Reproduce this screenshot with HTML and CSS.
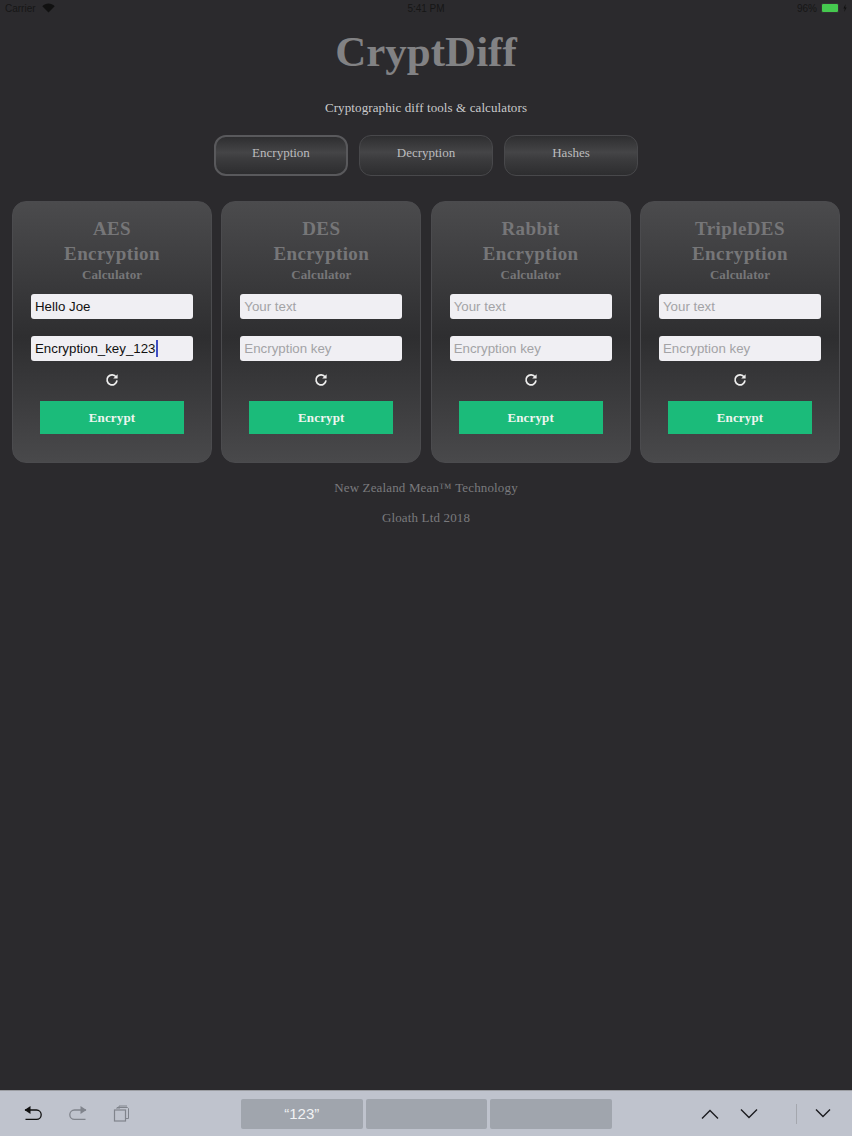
FILE: index.html
```html
<!DOCTYPE html>
<html lang="en">
<head>
    <meta charset="UTF-8">
    <meta name="viewport" content="width=device-width, initial-scale=1.0">
    <title>CryptDiff</title>
    <link rel="stylesheet" href="styles.css">
</head>
<body>
    <div class="status-bar">
        <div class="status-left">
            <span>Carrier</span>
            <svg class="wifi" width="13" height="10" viewBox="0 0 13 10"><path d="M6.5 9.6 0.3 3.2C3.8 -0.4 9.2 -0.4 12.7 3.2Z" fill="#111"/></svg>
        </div>
        <div class="status-time">5:41 PM</div>
        <div class="status-right">
            <span>96%</span>
            <span class="battery"></span>
            <svg width="4" height="8" viewBox="0 0 4 8"><path d="M2.6 0 0.4 4.4H1.8L1.2 8 3.6 3.4H2.2Z" fill="#111"/></svg>
        </div>
    </div>

    <header class="header">
        <h1>CryptDiff</h1>
        <p class="tagline">Cryptographic diff tools &amp; calculators</p>
    </header>

    <nav class="tabs">
        <div class="tab active">Encryption</div>
        <div class="tab">Decryption</div>
        <div class="tab">Hashes</div>
    </nav>

    <main class="cards">
        <section class="card">
            <h2>AES<br>Encryption</h2>
            <h3>Calculator</h3>
            <div class="field">Hello Joe</div>
            <div class="field">Encryption_key_123<span class="caret"></span></div>
            <svg class="refresh" width="14" height="14" viewBox="0 0 14 14"><path d="M11.2 4.1A5 5 0 1 0 12 7.4" fill="none" stroke="#eee" stroke-width="1.7"/><path d="M12.6 1.2V5.6H8.2Z" fill="#eee"/></svg>
            <div class="encrypt">Encrypt</div>
        </section>
        <section class="card">
            <h2>DES<br>Encryption</h2>
            <h3>Calculator</h3>
            <div class="field empty">Your text</div>
            <div class="field empty">Encryption key</div>
            <svg class="refresh" width="14" height="14" viewBox="0 0 14 14"><path d="M11.2 4.1A5 5 0 1 0 12 7.4" fill="none" stroke="#eee" stroke-width="1.7"/><path d="M12.6 1.2V5.6H8.2Z" fill="#eee"/></svg>
            <div class="encrypt">Encrypt</div>
        </section>
        <section class="card">
            <h2>Rabbit<br>Encryption</h2>
            <h3>Calculator</h3>
            <div class="field empty">Your text</div>
            <div class="field empty">Encryption key</div>
            <svg class="refresh" width="14" height="14" viewBox="0 0 14 14"><path d="M11.2 4.1A5 5 0 1 0 12 7.4" fill="none" stroke="#eee" stroke-width="1.7"/><path d="M12.6 1.2V5.6H8.2Z" fill="#eee"/></svg>
            <div class="encrypt">Encrypt</div>
        </section>
        <section class="card">
            <h2>TripleDES<br>Encryption</h2>
            <h3>Calculator</h3>
            <div class="field empty">Your text</div>
            <div class="field empty">Encryption key</div>
            <svg class="refresh" width="14" height="14" viewBox="0 0 14 14"><path d="M11.2 4.1A5 5 0 1 0 12 7.4" fill="none" stroke="#eee" stroke-width="1.7"/><path d="M12.6 1.2V5.6H8.2Z" fill="#eee"/></svg>
            <div class="encrypt">Encrypt</div>
        </section>
    </main>

    <footer class="footer">
        <p>New Zealand Mean™ Technology</p>
        <p>Gloath Ltd 2018</p>
    </footer>

    <div class="keyboard-bar">
        <div class="kb-left">
            <svg width="20" height="18" viewBox="0 0 20 18"><path d="M2 5H13.5A4.6 4.6 0 0 1 13.5 14.4H2.5" fill="none" stroke="#111" stroke-width="1.3"/><path d="M7.5 1V9L1.5 5Z" fill="#111"/></svg>
            <svg width="20" height="18" viewBox="0 0 20 18"><path d="M18 5H6.5A4.6 4.6 0 0 0 6.5 14.4H17.5" fill="none" stroke="#80848c" stroke-width="1.3"/><path d="M12.5 1V9L18.5 5Z" fill="#80848c"/></svg>
            <svg width="17" height="18" viewBox="0 0 17 18"><path d="M4 4V2.5H14.5L15.5 3.5V13.5H13" fill="none" stroke="#80848c" stroke-width="1"/><path d="M6 4V1H14" fill="none" stroke="#80848c" stroke-width="1"/><rect x="1.5" y="5" width="11" height="11" fill="none" stroke="#80848c" stroke-width="1.2"/></svg>
        </div>
        <div class="suggestions">
            <div class="suggestion">“123”</div>
            <div class="suggestion"></div>
            <div class="suggestion"></div>
        </div>
        <div class="kb-right">
            <svg width="18" height="10" viewBox="0 0 18 10"><path d="M1 9.5 9 1.5 17 9.5" fill="none" stroke="#1b1b1f" stroke-width="1.4"/></svg>
            <svg class="kb-next" width="18" height="10" viewBox="0 0 18 10"><path d="M1 .5 9 8.5 17 .5" fill="none" stroke="#1b1b1f" stroke-width="1.4"/></svg>
            <span class="kb-sep"></span>
            <svg class="kb-hide" width="16" height="9" viewBox="0 0 16 9"><path d="M1 .5 8 7.5 15 .5" fill="none" stroke="#1b1b1f" stroke-width="1.4"/></svg>
        </div>
    </div>
</body>
</html>
```

FILE: styles.css
```css
* {
    box-sizing: border-box;
}
html, body {
    height: 100%;
}
body {
    margin: 0;
    min-height: 1136px;
    display: flex;
    flex-direction: column;
    background-color: #2b2a2d;
    font-family: "Liberation Serif", "Times New Roman", serif;
    color: #ccc;
    overflow: hidden;
}
.status-bar {
    height: 16px;
    padding: 0 5px;
    display: grid;
    grid-template-columns: 1fr auto 1fr;
    align-items: center;
    font-family: "Liberation Sans", Arial, sans-serif;
    font-size: 10px;
    color: #161616;
}
.status-left {
    display: flex;
    align-items: center;
    gap: 6px;
}
.status-right {
    display: flex;
    align-items: center;
    justify-content: flex-end;
    gap: 4px;
}
.battery {
    width: 18px;
    height: 10px;
    background-color: #45c94f;
    border: 1px solid #333;
    border-radius: 2px;
}
.header {
    text-align: center;
}
h1 {
    margin: 8px 0 0;
    font-size: 43px;
    line-height: 56px;
    color: #828284;
}
.tagline {
    margin: 20px 0 0;
    font-size: 13px;
    line-height: 16px;
    letter-spacing: 0.1px;
    color: #c9c9cb;
}
.tabs {
    margin-top: 19px;
    display: flex;
    justify-content: center;
    gap: 11px;
}
.tab {
    width: 134px;
    height: 41px;
    padding-bottom: 6px;
    display: flex;
    align-items: center;
    justify-content: center;
    font-size: 13px;
    color: #bcbcbe;
    border: 1px solid #48484b;
    border-radius: 12px;
    background: linear-gradient(#2e2e30, #454547 42%, #3c3c3e 58%, #2d2d2f);
}
.tab.active {
    border: 2px solid #59595c;
}
.cards {
    margin-top: 25px;
    padding: 0 12px;
    display: grid;
    grid-template-columns: repeat(4, 1fr);
    gap: 9.3px;
}
.card {
    height: 262px;
    padding: 14px 18px 0;
    display: flex;
    flex-direction: column;
    align-items: center;
    border: 1px solid #4b4b4e;
    border-radius: 14px;
    background: linear-gradient(#4b4b4d, #2e2e30 52%, #49494b);
}
.card h2 {
    margin: 0;
    font-size: 19px;
    line-height: 25px;
    letter-spacing: 0.4px;
    text-align: center;
    color: #767678;
}
.card h3 {
    margin: 1px 0 12px;
    font-size: 13px;
    line-height: 15px;
    letter-spacing: 0.1px;
    color: #767678;
}
.field {
    width: 100%;
    height: 25px;
    margin-bottom: 17px;
    padding: 0 4px;
    display: flex;
    align-items: center;
    font-family: "Liberation Sans", Arial, sans-serif;
    font-size: 13.3px;
    color: #111;
    background-color: #f0eff3;
    border-radius: 3px;
}
.field.empty {
    color: #a3a3a6;
}
.caret {
    width: 2px;
    height: 17px;
    background-color: #3f4ec4;
}
.refresh {
    margin-top: -5px;
}
.encrypt {
    width: 144px;
    height: 33px;
    margin-top: 14px;
    display: flex;
    align-items: center;
    justify-content: center;
    font-size: 13px;
    font-weight: bold;
    letter-spacing: 0.15px;
    color: #eef5f0;
    background-color: #1bbb7a;
}
.footer {
    margin-top: 17px;
    text-align: center;
    font-size: 13px;
    letter-spacing: 0.15px;
    color: #7a7a7d;
}
.footer p {
    margin: 0 0 15px;
    line-height: 15px;
}
.keyboard-bar {
    margin-top: auto;
    height: 46px;
    position: relative;
    padding: 7px 0 7px 23px;
    display: flex;
    align-items: center;
    background-color: #bfc3cd;
    border-top: 1px solid #9b9da2;
}
.kb-left {
    width: 218px;
    display: flex;
    align-items: center;
    gap: 25px;
}
.suggestions {
    display: flex;
    gap: 3px;
    height: 30px;
}
.suggestion {
    width: 121.5px;
    display: flex;
    align-items: center;
    justify-content: center;
    font-family: "Liberation Sans", Arial, sans-serif;
    font-size: 15px;
    color: #f1f2f4;
    background-color: #a0a5ad;
    border-radius: 2px;
}
.kb-right {
    margin-left: 89px;
    display: flex;
    align-items: center;
}
.kb-next {
    margin-left: 21px;
}
.kb-sep {
    width: 1px;
    height: 20px;
    margin-left: 38px;
    background-color: #a4a7ae;
}
.kb-hide {
    margin-left: 18px;
}
```
